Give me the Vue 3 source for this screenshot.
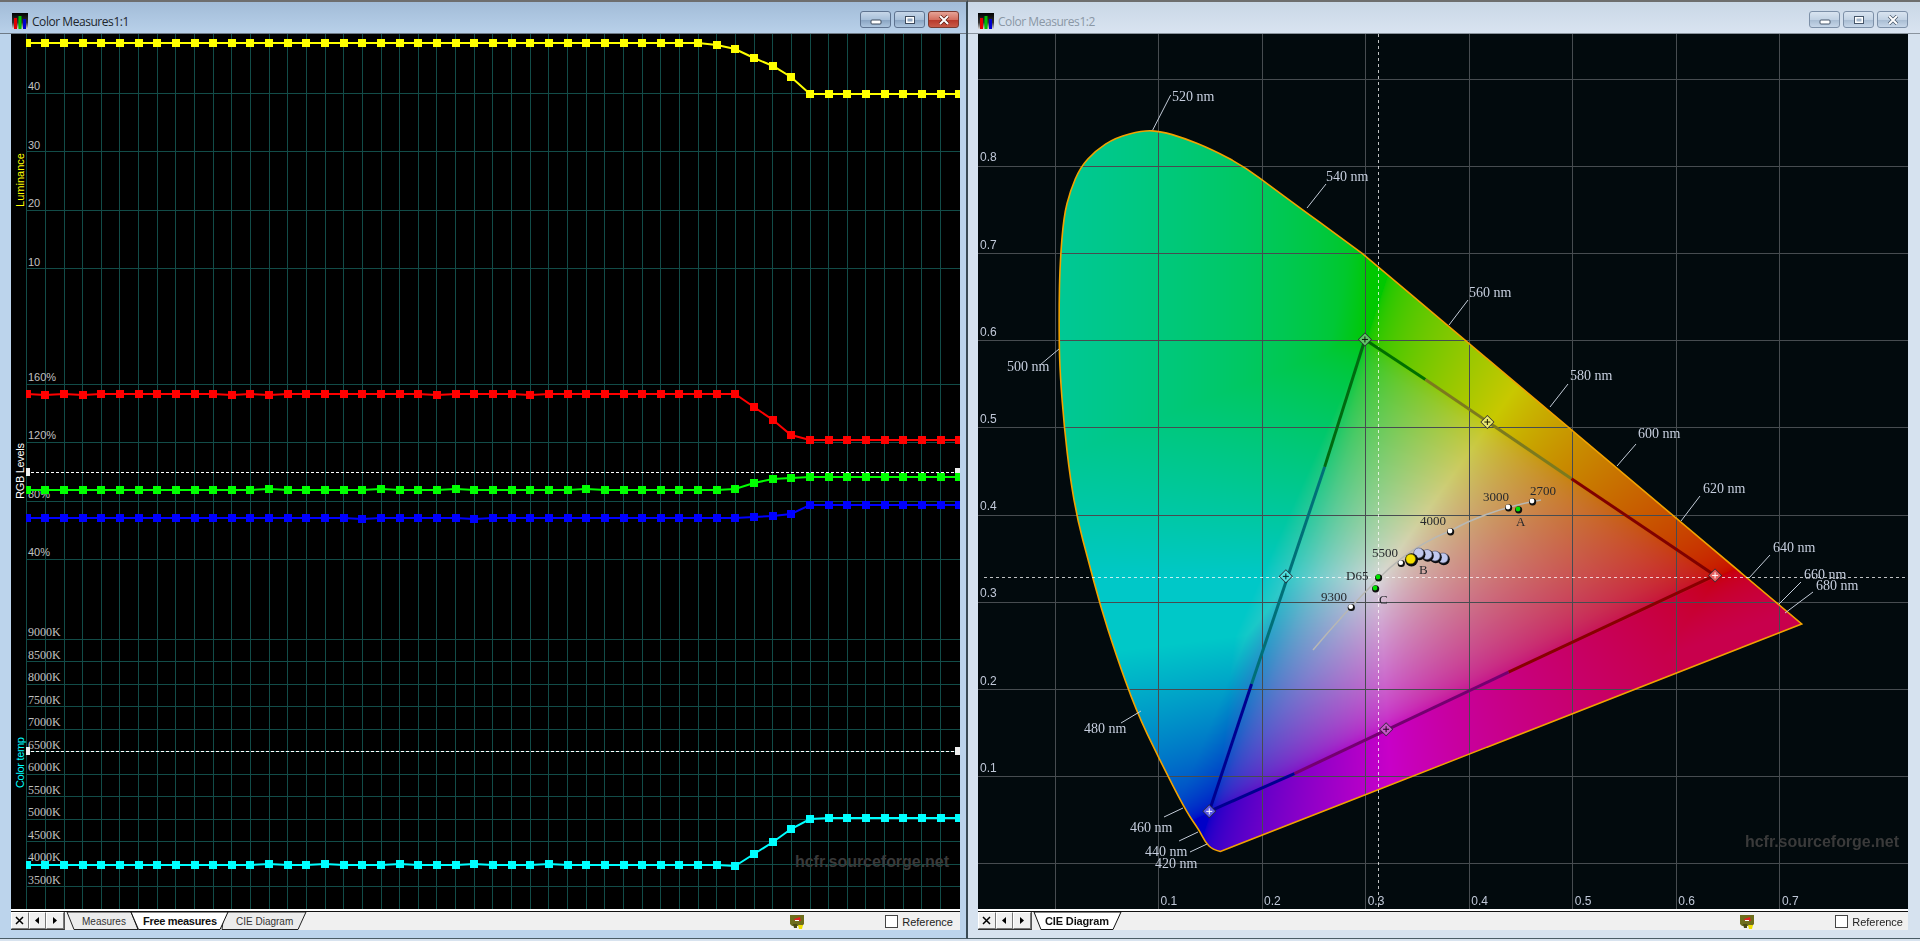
<script setup>
import { ref, onMounted } from 'vue'

// ---- left chart: three stacked series on a shared x grid
const colX = (i) => 26.7 + 18.65 * i
const crisp = (v) => Math.floor(v) + 0.5
const gridXs = Array.from({ length: 50 }, (_, i) => crisp(colX(i)))
const lumLines = [
  { y: 93.3, label: '40' },
  { y: 151.5, label: '30' },
  { y: 210, label: '20' },
  { y: 268.5, label: '10' },
]
const rgbLines = [
  { y: 384, label: '160%' },
  { y: 442.3, label: '120%' },
  { y: 501, label: '80%' },
  { y: 559.3, label: '40%' },
]
const kLines = [9000, 8500, 8000, 7500, 7000, 6500, 6000, 5500, 5000, 4500, 4000, 3500].map((k, i) => ({
  y: 639.3 + 22.49 * i,
  label: k + 'K',
}))

function makeSeries(color, flat, ramp, end, bumps = {}) {
  const pts = []
  for (let i = 0; i <= 50; i++) {
    let y
    if (i < 38) y = flat + (bumps[i] || 0)
    else if (i - 38 < ramp.length) y = ramp[i - 38]
    else y = end + (bumps[i] || 0)
    pts.push({ x: Math.round(colX(i)), y: Math.round(y) })
  }
  return { color, pts, line: pts.map((p) => `${p.x},${p.y}`).join(' ') }
}

const series = [
  (() => {
    const s = makeSeries('#ffff00', 43, [49, 57.6, 66, 77, 93.5], 94)
    s.pts[37].y = 45
    s.line = s.pts.map((p) => `${p.x},${p.y}`).join(' ')
    return s
  })(),
  makeSeries('#ff0000', 394, [394, 407, 420, 435, 440], 440, { 1: 1, 3: 1, 11: 1, 13: 1, 22: 1, 27: 1 }),
  makeSeries('#00ff00', 489.5, [489, 483, 479, 477.5, 476.5], 476.5, { 13: -1, 19: -1, 23: -1, 30: -1 }),
  makeSeries('#0000ff', 517.5, [517.5, 517, 516, 514, 505], 504.5, { 18: 1, 24: 1 }),
  makeSeries('#00ffff', 865, [866, 854, 842, 829, 819], 818, { 13: -1, 16: -1, 20: -1, 24: -1, 28: -1 }),
]

// ---- right chart: the reference crop was read in these zoom units
const zx = (v) => 1040 + v / 1.985
const zy = (v) => 120 + v / 2.119
const chartBox = { x: 978, y: 34, w: 930, h: 875 }
const toCieX = (px) => (px - 1055) / 1035.6
const toCieY = (py) => (863.9 - py) / 872

const cieGridX = Array.from({ length: 8 }, (_, i) => crisp(1055 + 1035.6 * (i / 10)))
const cieGridY = Array.from({ length: 10 }, (_, i) => crisp(863.9 - 872 * (i / 10))).filter((y) => y > 40)
const cieAxisY = [0.1, 0.2, 0.3, 0.4, 0.5, 0.6, 0.7, 0.8].map((v) => ({ label: v.toFixed(1), y: 863.9 - 872 * v - 5 }))
const cieAxisX = [1, 2, 3, 4, 5, 6, 7].map((v) => ({ label: (v / 10).toFixed(1), x: 1055 + 103.56 * v + 2 }))

const curve = [
  [358, 1550], [342, 1546], [328, 1530], [316, 1505], [290, 1465], [237, 1355], [190, 1250], [150, 1130],
  [120, 1030], [95, 930], [75, 850], [60, 760], [48, 650], [40, 540], [38, 470], [38, 380], [40, 300],
  [47, 205], [60, 150], [80, 100], [110, 65], [150, 37], [205, 22], [240, 24], [285, 38], [340, 62],
  [405, 98], [470, 150], [640, 283],
].map(([a, b]) => [zx(a), zy(b)])

function locusPath() {
  const red = [zx(1512), zy(1068)]
  let d = `M${curve[0][0]} ${curve[0][1]}`
  for (let i = 1; i < curve.length - 1; i++) {
    const mx = (curve[i][0] + curve[i + 1][0]) / 2
    const my = (curve[i][1] + curve[i + 1][1]) / 2
    d += ` Q${curve[i][0]} ${curve[i][1]} ${mx} ${my}`
  }
  const last = curve[curve.length - 1]
  d += ` L${last[0]} ${last[1]} L${red[0]} ${red[1]} Z`
  return d
}
const locus = locusPath()

const leaders = [
  [1152.7, 130, 1170.7, 95], [1307, 208, 1326, 184], [1449, 325, 1468, 300], [1550, 407, 1568, 384],
  [1617, 466, 1636, 444], [1681, 521, 1700, 496], [1749, 578, 1770, 555], [1779, 604, 1801, 582],
  [1785, 613, 1813, 592], [1040, 365, 1059, 349], [1121, 723, 1141, 711], [1164, 817, 1183, 808],
  [1179, 841, 1198, 832], [1190, 852, 1207, 844],
]
const nmLabels = [
  { t: '520 nm', x: 1172, y: 101 }, { t: '540 nm', x: 1326, y: 181 }, { t: '560 nm', x: 1469, y: 297 },
  { t: '580 nm', x: 1570, y: 380 }, { t: '600 nm', x: 1638, y: 438 }, { t: '620 nm', x: 1703, y: 493 },
  { t: '640 nm', x: 1773, y: 552 }, { t: '660 nm', x: 1804, y: 579 }, { t: '680 nm', x: 1816, y: 590 },
  { t: '500 nm', x: 1007, y: 371 }, { t: '480 nm', x: 1084, y: 733 }, { t: '460 nm', x: 1130, y: 832 },
  { t: '440 nm', x: 1145, y: 856 }, { t: '420 nm', x: 1155, y: 868 },
]

const seg = (a, b, c, d, color) => ({ x1: zx(a), y1: zy(b), x2: zx(c), y2: zy(d), color })
const gamutEdges = [
  seg(645, 465, 765, 550, '#007000'), seg(765, 550, 1055, 760, '#7c7a1e'), seg(1055, 760, 1340, 965, '#800000'),
  seg(645, 465, 565, 735, '#006a10'), seg(565, 735, 420, 1195, '#007078'), seg(420, 1195, 336, 1465, '#000090'),
  seg(1340, 965, 930, 1170, '#880000'), seg(930, 1170, 505, 1385, '#740070'), seg(505, 1385, 336, 1465, '#000090'),
]
const primaries = [
  { x: 645, y: 465, fill: '#62c468', cross: '#001a00' }, { x: 888, y: 640, fill: '#eaea70', cross: '#1a1a00' },
  { x: 1340, y: 965, fill: '#e86060', cross: '#ffffff' }, { x: 488, y: 967, fill: '#50e0e0', cross: '#002020' },
  { x: 687, y: 1291, fill: '#c858c8', cross: '#200020' }, { x: 336, y: 1465, fill: '#5a5ae8', cross: '#ffffff' },
].map((p) => ({ ...p, x: zx(p.x), y: zy(p.y) }))

const planck = 'M1313 650 Q1345 612 1378 579 T1450 531 Q1490 509 1541 500'
const refDots = [
  { x: 1350.7, y: 606.7, c: '#ffffff' }, { x: 1400.7, y: 562.7, c: '#ffffff' }, { x: 1450, y: 531, c: '#ffffff' },
  { x: 1508, y: 507, c: '#ffffff' }, { x: 1532, y: 501, c: '#ffffff' }, { x: 1518, y: 509, c: '#00e000' },
  { x: 1378, y: 577, c: '#00e000' }, { x: 1375, y: 588, c: '#00e000' },
]
const refLabels = [
  { t: '9300', x: 1321, y: 601 }, { t: '5500', x: 1372, y: 557 }, { t: 'D65', x: 1346, y: 580 },
  { t: 'C', x: 1379, y: 604 }, { t: 'B', x: 1419, y: 574 }, { t: '4000', x: 1420, y: 525 },
  { t: '3000', x: 1483, y: 501 }, { t: '2700', x: 1530, y: 495 }, { t: 'A', x: 1516, y: 526 },
]
const measures = [
  { x: 1443, y: 558 }, { x: 1435, y: 556 }, { x: 1427, y: 554.5 }, { x: 1418.7, y: 553 },
]

// xy to sRGB, with the app's out-of-gamut look tuned to the screenshot
function cieColor(x, y) {
  const X = x / y
  const Z = (1 - x - y) / y
  let r = 3.2406 * X - 1.5372 - 0.4986 * Z
  let g = -0.9689 * X + 1.8758 + 0.0415 * Z
  let b = 0.0557 * X - 0.204 + 1.057 * Z
  const m = Math.max(r, g, b)
  r /= m
  g /= m
  b /= m
  const outside = Math.min(1, Math.max(0, -r / 0.15))
  // magenta end keeps some blue right into the red corner
  if (g < 0) b = Math.max(b, Math.min(0.12, -g * 1.5))
  g = Math.max(0, g)
  b = Math.max(0, b)
  // green end keeps some blue left of the green primary
  b = Math.max(b, 0.53 * Math.max(0, (0.3 - x) / 0.3) * outside)
  if (b > g) g = Math.min(1, g * (1 + 0.6 * outside))
  // white spills a little past the green-blue edge, most at cyan
  const e = 0.22 * Math.min(g, b)
  if (r < e) r = e > 0 ? Math.pow(Math.max(0, r + e), 2) / (4 * e) : Math.max(0, r)
  const s = 200 + 16 * Math.min(r, g, b)
  return [Math.pow(r, 1 / 2.2) * s, Math.pow(g, 1 / 2.2) * s, Math.pow(b, 1 / 2.2) * s]
}

const horseshoe = ref(null)

onMounted(() => {
  const ctx = horseshoe.value.getContext('2d')
  const off = document.createElement('canvas')
  off.width = chartBox.w
  off.height = chartBox.h
  const octx = off.getContext('2d')
  const img = octx.createImageData(chartBox.w, chartBox.h)
  for (let j = 0; j < chartBox.h; j++) {
    const py = chartBox.y + j
    if (py < 120 || py > 860) continue
    for (let i = 0; i < chartBox.w; i++) {
      const px = chartBox.x + i
      if (px < 1050 || px > 1815) continue
      const [r, g, b] = cieColor(toCieX(px), toCieY(py))
      const k = (j * chartBox.w + i) * 4
      img.data[k] = r
      img.data[k + 1] = g
      img.data[k + 2] = b
      img.data[k + 3] = 255
    }
  }
  octx.putImageData(img, 0, 0)
  ctx.translate(-chartBox.x, -chartBox.y)
  ctx.clip(new Path2D(locus))
  ctx.drawImage(off, chartBox.x, chartBox.y)
})
</script>

<template>
  <div class="desktop">
    <section class="window window-active">
      <header class="titlebar">
        <svg class="app-icon" viewBox="0 0 16 16">
          <defs>
            <linearGradient id="iconBack" x1="0" y1="0" x2="0" y2="1">
              <stop offset="0" stop-color="#000" />
              <stop offset="0.6" stop-color="#333" />
              <stop offset="1" stop-color="#ddd" />
            </linearGradient>
          </defs>
          <rect width="16" height="16" fill="url(#iconBack)" />
          <rect x="2" y="5" width="3" height="11" fill="#e00000" />
          <rect x="6.5" y="3" width="3" height="13" fill="#00c000" />
          <rect x="11" y="6" width="3" height="10" fill="#0000d0" />
        </svg>
        <span class="title">Color Measures1:1</span>
        <div class="caption-buttons">
          <button class="caption-btn" type="button">
            <svg viewBox="0 0 16 10" width="16" height="10"><rect x="3" y="5" width="10" height="4" rx="1" fill="#fff" stroke="#3c4a5c" /></svg>
          </button>
          <button class="caption-btn" type="button">
            <svg viewBox="0 0 16 10" width="16" height="10"><rect x="3.5" y="1.5" width="9" height="7" fill="#fff" stroke="#3c4a5c" /><rect x="5.5" y="3.5" width="5" height="3" fill="#8fa6c0" /></svg>
          </button>
          <button class="caption-btn caption-close" type="button">
            <svg viewBox="0 0 16 10" width="16" height="10"><path d="M4 1 L12 9 M12 1 L4 9" stroke="#5a1a10" stroke-width="3.4" /><path d="M4 1 L12 9 M12 1 L4 9" stroke="#fff" stroke-width="2" /></svg>
          </button>
        </div>
      </header>

      <svg class="chart chart-left" viewBox="11 34 949 875" width="949" height="875">
        <defs>
          <clipPath id="plotClip"><rect x="26" y="34" width="934" height="875" /></clipPath>
        </defs>
        <rect x="11" y="34" width="949" height="875" fill="#000" />
        <g stroke="#124c48" stroke-width="1">
          <line v-for="x in gridXs" :key="x" :x1="x" :x2="x" y1="34" y2="909" />
          <line v-for="l in [...lumLines, ...rgbLines, ...kLines]" :key="l.label" x1="26" x2="960" :y1="crisp(l.y)" :y2="crisp(l.y)" />
        </g>
        <g class="axis-sans">
          <text v-for="l in [...lumLines, ...rgbLines]" :key="l.label" x="28" :y="l.y - 3">{{ l.label }}</text>
        </g>
        <g class="axis-serif">
          <text v-for="l in kLines" :key="l.label" x="28" :y="l.y - 3">{{ l.label }}</text>
        </g>
        <text class="v-label" transform="translate(24 207) rotate(-90)" fill="#ffff00" textLength="54">Luminance</text>
        <text class="v-label" transform="translate(24 499) rotate(-90)" fill="#ffffff" textLength="56">RGB Levels</text>
        <text class="v-label" transform="translate(24 788) rotate(-90)" fill="#00ffff" textLength="51">Color temp</text>

        <g clip-path="url(#plotClip)">
          <line x1="26" x2="960" y1="472.5" y2="472.5" class="ref-dash" />
          <line x1="26" x2="960" y1="751.5" y2="751.5" class="ref-dash" />
          <rect x="26" y="468" width="4" height="8" fill="#eee" />
          <rect x="955" y="468" width="5" height="8" fill="#eee" />
          <rect x="26" y="747" width="4" height="8" fill="#eee" />
          <rect x="955" y="747" width="5" height="8" fill="#eee" />
          <g v-for="s in series" :key="s.color">
            <polyline :points="s.line" fill="none" :stroke="s.color" stroke-width="2" />
            <rect v-for="p in s.pts" :key="p.x" :x="p.x - 4" :y="p.y - 4" width="8" height="8" :fill="s.color" />
          </g>
        </g>
        <text class="watermark" x="795" y="867" textLength="154">hcfr.sourceforge.net</text>
      </svg>

      <footer class="tabbar">
        <div class="tabstrip">
          <div class="nav">
            <button class="nav-btn" type="button"><svg viewBox="0 0 9 9" width="9" height="9"><path d="M1 1 L8 8 M8 1 L1 8" stroke="#000" stroke-width="1.5" /></svg></button>
            <button class="nav-btn" type="button"><svg viewBox="0 0 9 9" width="9" height="9"><path d="M6 1 L2 4.5 L6 8 Z" fill="#000" /></svg></button>
            <button class="nav-btn" type="button"><svg viewBox="0 0 9 9" width="9" height="9"><path d="M3 1 L7 4.5 L3 8 Z" fill="#000" /></svg></button>
          </div>
          <svg class="tabs" viewBox="64 912 242 18" width="242" height="18">
            <polygon points="65,912 72,929.5 136,929.5 129,912" class="tab" />
            <polygon points="222,912 220,929.5 296,929.5 304,912" class="tab" />
            <polygon points="129,912 136.5,929.5 218,929.5 226,912" class="tab-on" />
            <text x="80" y="925" class="tab-text">Measures</text>
            <text x="141" y="925" class="tab-text tab-text-on" textLength="74">Free measures</text>
            <text x="234" y="925" class="tab-text">CIE Diagram</text>
          </svg>
          <div class="status status-left">
            <svg class="shield" viewBox="0 0 14 14" width="14" height="14">
              <path d="M0 0 H14 V9 L12 11 H2 L0 9 Z" fill="#6e6e1c" />
              <path d="M4 4 L10 2 L11 6 H5 Z" fill="#e02020" />
              <path d="M5 5 H9 V6 H5 Z" fill="#fff" />
              <path d="M8 10 H13 L12 14 H9 Z" fill="#f0e000" />
              <path d="M3 9 H7 V13 H4 Z" fill="#4c4c14" />
            </svg>
            <label class="reference"><span class="checkbox"></span>Reference</label>
          </div>
        </div>
      </footer>
    </section>

    <section class="window">
      <header class="titlebar">
        <svg class="app-icon" viewBox="0 0 16 16">
          <rect width="16" height="16" fill="url(#iconBack)" />
          <rect x="2" y="5" width="3" height="11" fill="#e00000" />
          <rect x="6.5" y="3" width="3" height="13" fill="#00c000" />
          <rect x="11" y="6" width="3" height="10" fill="#0000d0" />
        </svg>
        <span class="title">Color Measures1:2</span>
        <div class="caption-buttons">
          <button class="caption-btn" type="button">
            <svg viewBox="0 0 16 10" width="16" height="10"><rect x="3" y="5" width="10" height="4" rx="1" fill="#fff" stroke="#46566a" /></svg>
          </button>
          <button class="caption-btn" type="button">
            <svg viewBox="0 0 16 10" width="16" height="10"><rect x="3.5" y="1.5" width="9" height="7" fill="#fff" stroke="#46566a" /><rect x="5.5" y="3.5" width="5" height="3" fill="#a5b8cc" /></svg>
          </button>
          <button class="caption-btn" type="button">
            <svg viewBox="0 0 16 10" width="16" height="10"><path d="M4 1 L12 9 M12 1 L4 9" stroke="#46566a" stroke-width="3.4" /><path d="M4 1 L12 9 M12 1 L4 9" stroke="#fff" stroke-width="2" /></svg>
          </button>
        </div>
      </header>

      <div class="chart-stack">
        <canvas ref="horseshoe" class="chart-layer" :width="chartBox.w" :height="chartBox.h"></canvas>
        <svg class="chart-layer" viewBox="978 34 930 875" width="930" height="875">
          <g stroke="#474c50" stroke-width="1">
            <line v-for="x in cieGridX" :key="x" :x1="x" :x2="x" y1="34" y2="909" />
            <line v-for="y in cieGridY" :key="y" x1="978" x2="1908" :y1="y" :y2="y" />
          </g>
          <path :d="locus" fill="none" stroke="#f2a200" stroke-width="1.6" />
          <line x1="1378.5" x2="1378.5" y1="34" y2="909" class="cross" />
          <line x1="984" x2="1908" y1="577.5" y2="577.5" class="cross" />
          <line v-for="(e, i) in gamutEdges" :key="i" :x1="e.x1" :y1="e.y1" :x2="e.x2" :y2="e.y2" :stroke="e.color" stroke-width="3" />
          <line v-for="(l, i) in leaders" :key="'l' + i" :x1="l[0]" :y1="l[1]" :x2="l[2]" :y2="l[3]" stroke="#c4ccd8" stroke-width="1" />
          <path :d="planck" fill="none" stroke="#b8b8b4" stroke-width="1.5" />
          <g v-for="p in primaries" :key="p.x">
            <path :d="`M${p.x} ${p.y - 7} l7 7 l-7 7 l-7 -7 Z`" fill="#2a2a34" />
            <path :d="`M${p.x} ${p.y - 6} l6 6 l-6 6 l-6 -6 Z`" :fill="p.fill" />
            <path :d="`M${p.x - 3} ${p.y} h6 M${p.x} ${p.y - 3} v6`" :stroke="p.cross" stroke-width="1" />
          </g>
          <g v-for="d in refDots" :key="d.x + '-' + d.y">
            <circle :cx="d.x + 0.6" :cy="d.y + 0.8" r="3.6" fill="#111" />
            <circle :cx="d.x" :cy="d.y" r="2.4" :fill="d.c" />
          </g>
          <text v-for="l in refLabels" :key="l.t" class="ref-label" :x="l.x" :y="l.y">{{ l.t }}</text>
          <g v-for="m in measures" :key="m.x">
            <circle :cx="m.x + 0.8" :cy="m.y + 1.2" r="6" fill="#0c0c10" />
            <circle :cx="m.x" :cy="m.y" r="5" fill="#c0c8ee" stroke="#5a5e78" stroke-width="0.6" />
          </g>
          <circle cx="1411.5" cy="559.8" r="6.6" fill="#0c0c10" />
          <circle cx="1410.7" cy="559" r="4.8" fill="#f6e000" stroke="#7a7000" stroke-width="0.5" />
          <text v-for="l in nmLabels" :key="l.t" class="nm-label" :x="l.x" :y="l.y">{{ l.t }}</text>
          <text v-for="a in cieAxisY" :key="a.label" class="cie-axis" x="980" :y="a.y">{{ a.label }}</text>
          <text v-for="a in cieAxisX" :key="a.label" class="cie-axis" :x="a.x" y="905">{{ a.label }}</text>
          <text class="watermark" x="1745" y="847" textLength="154">hcfr.sourceforge.net</text>
        </svg>
      </div>

      <footer class="tabbar">
        <div class="tabstrip">
          <div class="nav">
            <button class="nav-btn" type="button"><svg viewBox="0 0 9 9" width="9" height="9"><path d="M1 1 L8 8 M8 1 L1 8" stroke="#000" stroke-width="1.5" /></svg></button>
            <button class="nav-btn" type="button"><svg viewBox="0 0 9 9" width="9" height="9"><path d="M6 1 L2 4.5 L6 8 Z" fill="#000" /></svg></button>
            <button class="nav-btn" type="button"><svg viewBox="0 0 9 9" width="9" height="9"><path d="M3 1 L7 4.5 L3 8 Z" fill="#000" /></svg></button>
          </div>
          <svg class="tabs" viewBox="1030 912 92 18" width="92" height="18">
            <polygon points="1031,912 1038,929.5 1110,929.5 1118,912" class="tab-on" />
            <text x="1042" y="925" class="tab-text tab-text-on" textLength="64">CIE Diagram</text>
          </svg>
          <div class="status status-right">
            <svg class="shield" viewBox="0 0 14 14" width="14" height="14">
              <path d="M0 0 H14 V9 L12 11 H2 L0 9 Z" fill="#6e6e1c" />
              <path d="M4 4 L10 2 L11 6 H5 Z" fill="#e02020" />
              <path d="M5 5 H9 V6 H5 Z" fill="#fff" />
              <path d="M8 10 H13 L12 14 H9 Z" fill="#f0e000" />
              <path d="M3 9 H7 V13 H4 Z" fill="#4c4c14" />
            </svg>
            <label class="reference"><span class="checkbox"></span>Reference</label>
          </div>
        </div>
      </footer>
    </section>
  </div>
</template>

<style>
html,
body {
  margin: 0;
  overflow: hidden;
  background: #d8e3ef;
}
</style>

<style scoped>
.desktop {
  display: flex;
  width: 1920px;
  height: 941px;
  background: #d8e3ef;
  font-family: "Liberation Sans", Arial, sans-serif;
}

.window {
  box-sizing: border-box;
  flex: 0 0 952px;
  height: 939px;
  padding: 0 12px 0 10px;
  background: #d6e2ef;
  border-bottom: 1px solid #4a5c66;
  border-top: 2px solid #6e6e6e;
  box-shadow: inset 0 1px 0 #e8eef5;
  display: flex;
  flex-direction: column;
}

.window-active {
  flex: 0 0 968px;
  padding: 0 8px 0 11px;
  background: #bcd4ec;
  border-right: 2px solid #3a4a54;
  padding-right: 6px;
}

.titlebar {
  height: 32px;
  flex: none;
  display: flex;
  align-items: center;
  margin: 0 -12px 0 -10px;
  padding: 0 12px 0 10px;
  background: linear-gradient(#c9d7e6, #d9e4f1);
  box-shadow: inset 0 -2px 0 -1px #8a949e;
}

.window-active .titlebar {
  margin: 0 -6px 0 -11px;
  padding: 0 0 0 12px;
  background: linear-gradient(#a2bcd8, #b9d1ea);
  box-shadow: inset 0 -2px 0 -1px #6e7a86;
}

.app-icon {
  width: 16px;
  height: 16px;
  margin-top: 6px;
  flex: none;
}

.title {
  margin-left: 4px;
  margin-top: 6px;
  font-family: "Open Sans", sans-serif;
  font-size: 12px;
  letter-spacing: -0.45px;
  color: #8a97a5;
  white-space: nowrap;
}

.window-active .title {
  color: #20262c;
}

.caption-buttons {
  margin-left: auto;
  margin-top: 3px;
  display: flex;
  gap: 3px;
}

.window-active .caption-buttons {
  margin-right: 7px;
}

.caption-btn {
  width: 31px;
  height: 17px;
  padding: 0;
  display: flex;
  align-items: center;
  justify-content: center;
  border: 1px solid #7d90a8;
  border-radius: 3px;
  background: linear-gradient(#d9e4f0 0%, #c2d2e4 50%, #a9bdd3 55%, #c6d6e8 100%);
}

.window-active .caption-btn:not(.caption-close) {
  background: linear-gradient(#c6d6e8 0%, #a8c0da 50%, #8aa5c3 55%, #adc5de 100%);
  border-color: #5e7390;
}

.caption-close {
  border-color: #7a3a30;
  background: linear-gradient(#e6a396 0%, #d47060 50%, #b8392a 55%, #c85a48 100%);
}

.chart {
  display: block;
  flex: none;
}

.chart-stack {
  display: grid;
  flex: none;
  width: 930px;
  height: 875px;
  background: #020a0d;
}

.chart-layer {
  grid-area: 1 / 1;
  display: block;
}

.axis-sans text {
  font: 11px "Liberation Sans", Arial, sans-serif;
  fill: #c0c0c0;
}

.axis-serif text {
  font: 12px "Liberation Serif", serif;
  fill: #c0c0c0;
}

.v-label {
  font: 11px "Liberation Sans", Arial, sans-serif;
}

.ref-dash {
  stroke: #fff;
  stroke-width: 1;
  stroke-dasharray: 3 2;
}

.cross {
  stroke: #fff;
  stroke-width: 1;
  stroke-dasharray: 3 3;
  opacity: 0.75;
}

.watermark {
  font: bold 16px "Liberation Sans", Arial, sans-serif;
  fill: #3a3a3a;
}

.nm-label {
  font: 14px "Liberation Serif", serif;
  fill: #c6cede;
}

.ref-label {
  font: 13px "Liberation Serif", serif;
  fill: #26282c;
}

.cie-axis {
  font: 12px "Liberation Sans", Arial, sans-serif;
  fill: #c0c8d8;
}

.tabbar {
  flex: none;
  height: 21px;
  box-sizing: border-box;
  border-top: 2px solid #fff;
  background: #f0f0f0;
}

.tabstrip {
  height: 19px;
  box-sizing: border-box;
  border-top: 1px solid #111;
  display: flex;
  align-items: flex-start;
}

.nav {
  display: flex;
  flex: none;
  border-right: 1px solid #555;
  border-bottom: 1px solid #333;
}

.nav-btn {
  width: 17.5px;
  height: 17px;
  padding: 0;
  display: flex;
  align-items: center;
  justify-content: center;
  box-sizing: border-box;
  background: #f0f0f0;
  border: 1px solid;
  border-color: #fff #777 #777 #fff;
}

.tabs {
  margin-left: 1px;
  flex: none;
  display: block;
}

.tab {
  fill: #ececec;
  stroke: #222;
  stroke-width: 1;
}

.tab-on {
  fill: #fff;
  stroke: #111;
  stroke-width: 1;
}

.tab-text {
  font: 10px "Liberation Sans", Arial, sans-serif;
  fill: #333;
}

.tab-text-on {
  font: bold 11px "Liberation Sans", Arial, sans-serif;
  fill: #111;
}

.status {
  margin-left: auto;
  display: flex;
  align-items: center;
  height: 17px;
  padding-top: 1px;
  gap: 81px;
}

.status-left {
  padding-right: 7px;
}

.status-right {
  padding-right: 5px;
}

.shield {
  flex: none;
}

.reference {
  display: flex;
  align-items: center;
  gap: 4px;
  font-size: 11px;
  color: #222;
}

.checkbox {
  width: 13px;
  height: 13px;
  box-sizing: border-box;
  border: 1px solid #444;
  background: #fff;
}
</style>
